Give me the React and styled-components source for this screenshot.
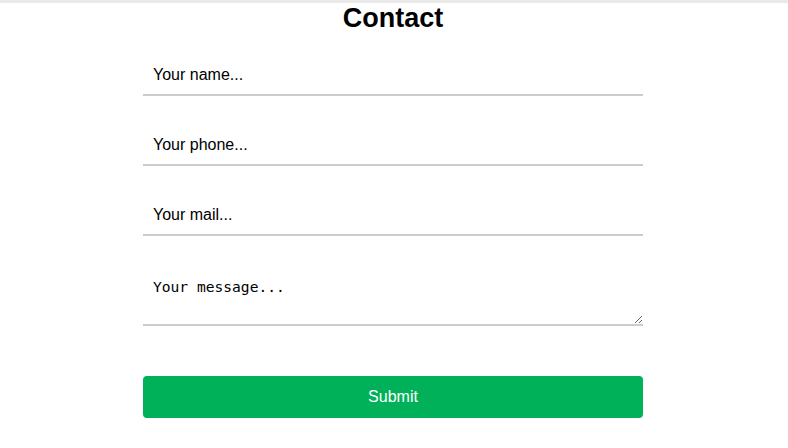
import React from 'react';
import styled, {createGlobalStyle} from 'styled-components';

const GlobalStyle = createGlobalStyle`
    body {
        margin: 0;
        background: #fff;
        font-family: "Liberation Sans", Arial, sans-serif;
    }
`

const App = () => {
    return (
        <>
            <GlobalStyle />
            <TopBar />
            <Section>
                <Title>Contact</Title>
                <Form onSubmit={e => e.preventDefault()}>
                    <Input type="text" placeholder="Your name..." />
                    <Input type="tel" placeholder="Your phone..." />
                    <Input type="email" placeholder="Your mail..." />
                    <Message placeholder="Your message..." />
                    <Button type="submit">Submit</Button>
                </Form>
            </Section>
        </>
    )
}

//Styles
const TopBar = styled.div`
    height: 3px;
    background: #e9e9e9;
`
const Section = styled.section`
    display: flex;
    flex-direction: column;
    align-items: center;
    padding-right: 2px;
`
const Title = styled.h1`
    margin: 0;
    font-size: 27px;
    line-height: 30px;
    font-weight: bold;
    color: #000;
`
const Form = styled.form`
    width: 500px;
    margin-top: 23px;
    display: flex;
    flex-direction: column;
    gap: 30px;
`
const Input = styled.input`
    box-sizing: border-box;
    height: 40px;
    width: 100%;
    padding: 0 10px;
    border: none;
    border-bottom: 2px solid #cccccc;
    outline: none;
    font-family: "Liberation Sans", Arial, sans-serif;
    font-size: 16px;
    color: #000;
    &::placeholder {
        color: #000;
    }
`
const Message = styled.textarea`
    box-sizing: border-box;
    height: 60px;
    width: 100%;
    padding: 12px 10px 0;
    border: none;
    border-bottom: 2px solid #cccccc;
    outline: none;
    font-family: "DejaVu Sans Mono", "Liberation Mono", monospace;
    font-size: 14.6px;
    color: #000;
    &::placeholder {
        color: #000;
    }
`
const Button = styled.button`
    margin-top: 20px;
    height: 42px;
    width: 100%;
    border: none;
    border-radius: 4px;
    background: #00b159;
    color: #fff;
    font-family: "Liberation Sans", Arial, sans-serif;
    font-size: 16px;
    cursor: pointer;
`
export default App
